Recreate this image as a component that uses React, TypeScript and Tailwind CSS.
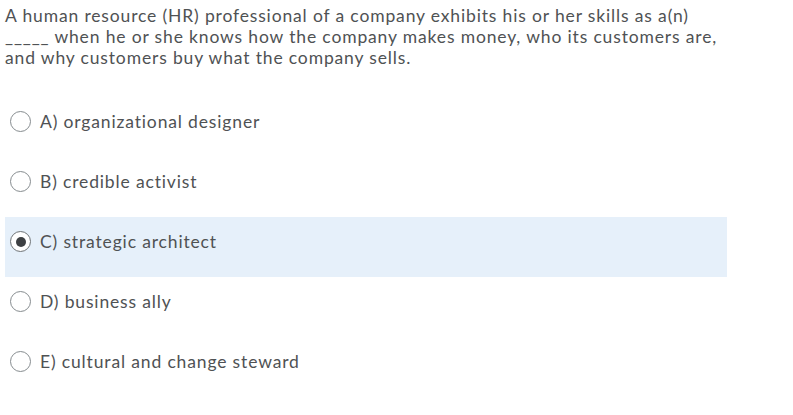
import React from "react";

const options = [
  { label: "A) organizational designer", selected: false },
  { label: "B) credible activist", selected: false },
  { label: "C) strategic architect", selected: true },
  { label: "D) business ally", selected: false },
  { label: "E) cultural and change steward", selected: false },
];

function Radio({ selected }: { selected: boolean }) {
  return (
    <span
      className={
        "flex h-[21px] w-[21px] shrink-0 items-center justify-center rounded-full border bg-white " +
        (selected ? "border-[#6e7376]" : "border-[#868c8f]")
      }
    >
      {selected && <span className="h-[10px] w-[10px] rounded-full bg-[#3d4043]" />}
    </span>
  );
}

export default function App() {
  return (
    <div className="h-[415px] w-[793px] bg-white font-['Lato','Open_Sans',sans-serif] text-[17.5px] tracking-[0.85px] text-[#4f5254]">
      <p className="pl-[5px] pt-[5px] leading-[21px]">
        A human resource (HR) professional of a company exhibits his or her skills as a(n)
        <br />
        _____ when he or she knows how the company makes money, who its customers are,
        <br />
        and why customers buy what the company sells.
      </p>
      <div className="mt-[29px] flex flex-col">
        {options.map((o) => (
          <div
            key={o.label}
            className={
              "ml-[5px] flex h-[60px] w-[722px] items-start gap-[9px] pl-[5px] pt-[14px] " +
              (o.selected ? "bg-[#e6f0fa]" : "")
            }
          >
            <Radio selected={o.selected} />
            <span className="leading-[21px]">{o.label}</span>
          </div>
        ))}
      </div>
    </div>
  );
}
